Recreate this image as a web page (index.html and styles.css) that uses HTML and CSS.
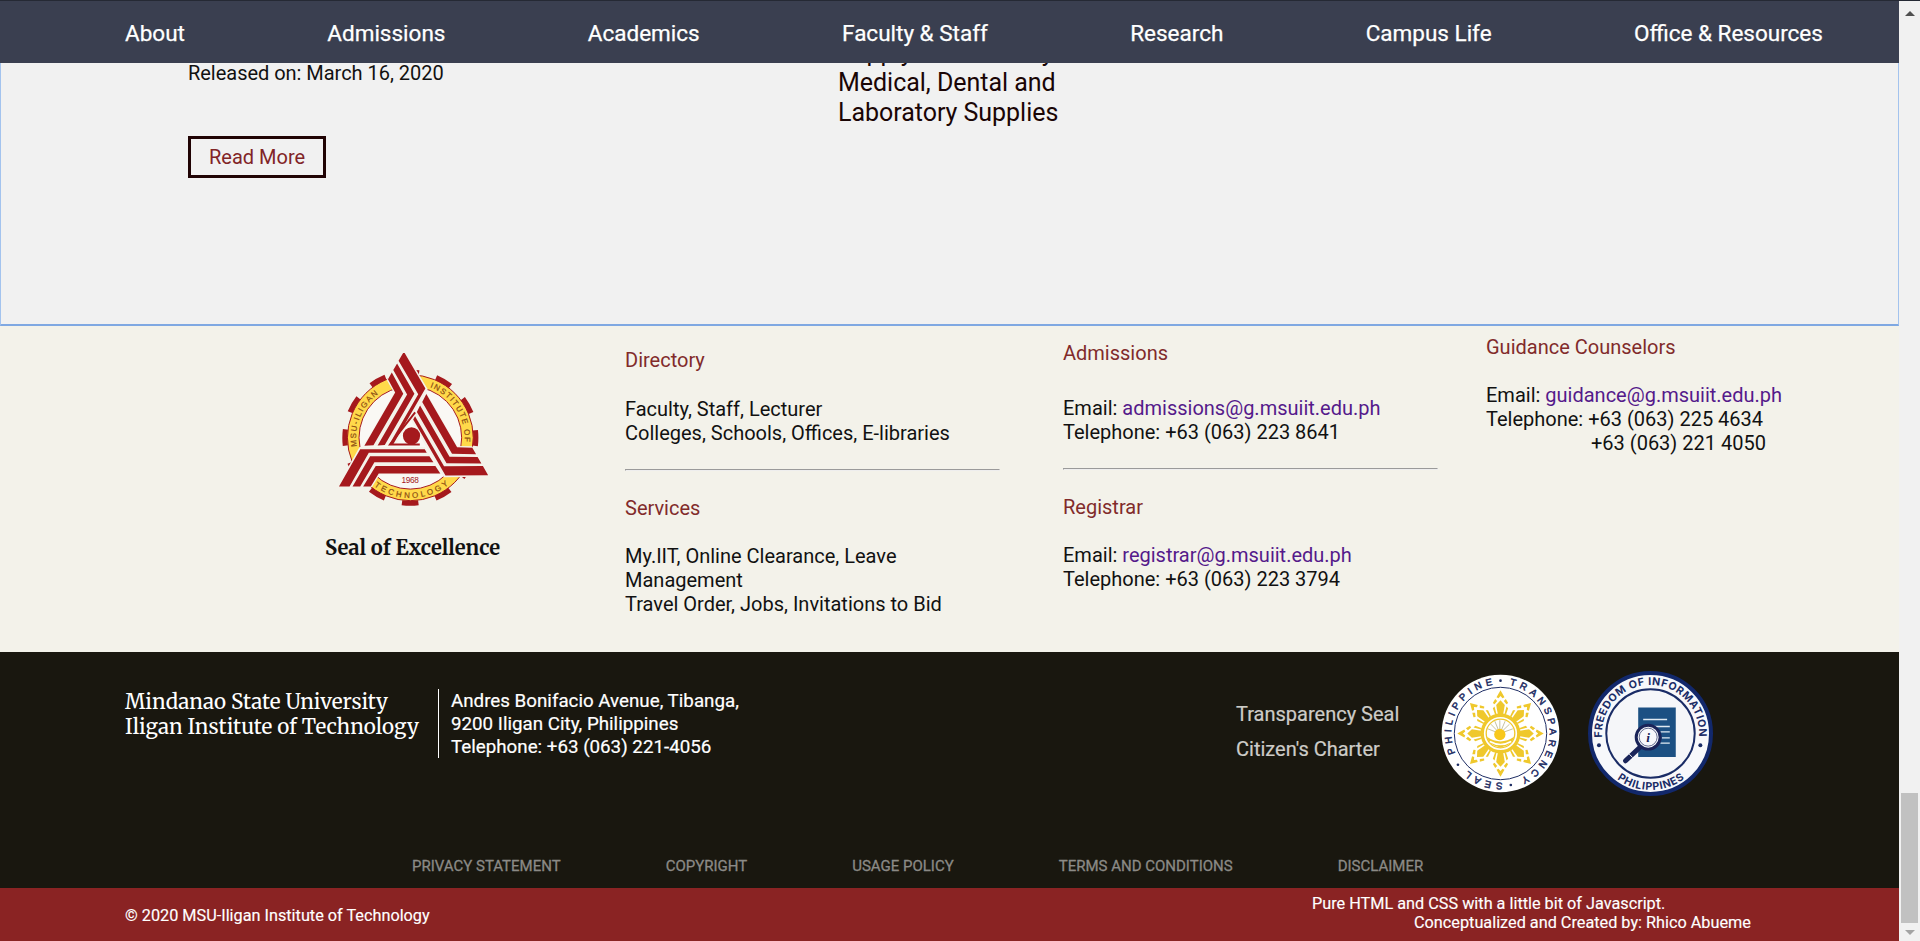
FILE: index.html
```html
<!DOCTYPE html>
<html lang="en">
<head>
<meta charset="utf-8">
<title>MSU-Iligan Institute of Technology</title>
<link rel="stylesheet" href="styles.css">
</head>
<body>
<div class="page">
  <nav class="nav">
    <a>About</a><a>Admissions</a><a>Academics</a><a>Faculty &amp; Staff</a><a>Research</a><a>Campus Life</a><a>Office &amp; Resources</a>
  </nav>
  <section class="news">
    <article class="news-left">
      <p>Released on: March 16, 2020</p>
      <a class="read-more">Read More</a>
    </article>
    <article class="news-mid">Supply and Delivery<br>Medical, Dental and<br>Laboratory Supplies</article>
  </section>
  <section class="info">
    <div class="seal">
      <svg class="seal-img" viewBox="80 66 456 465">
        <defs>
          <g id="arm">
            <path d="M86 469L150 357H345L351 367H176L118 469Z"/>
            <path d="M127 469L180 378H359L371 396H193L150 469Z"/>
            <path d="M159 469L197 407H377L392 430H206L182 469Z"/>
          </g>
          <path id="hull" d="M80 471L148 350H345L396 432H209L186 471Z"/>
          <path id="ringTop" d="M137.500 322A164 164 0 0 1 465.500 322A164 164 0 0 1 137.500 322"/>
          <path id="ringLow" d="M119.500 322A182 182 0 0 0 483.500 322"/>
        </defs>
        <circle class="cogs" cx="301.500" cy="322" r="197"/>
        <circle cx="301.500" cy="322" r="190" fill="#ffd94a" stroke="#a5191d" stroke-width="3"/>
        <circle cx="301.500" cy="322" r="155" fill="#faf8f4" stroke="#a5191d" stroke-width="3"/>
        <g fill="#f4f2ea"><use href="#hull"/><use href="#hull" transform="rotate(120 301.5 322)"/><use href="#hull" transform="rotate(240 301.5 322)"/></g>
        <g fill="#a5191d"><use href="#arm"/><use href="#arm" transform="rotate(120 301.5 322)"/><use href="#arm" transform="rotate(240 301.5 322)"/></g>
        <path d="M330 342H240L316 245" fill="none" stroke="#a5191d" stroke-width="6"/>
        <circle cx="305" cy="316" r="26" fill="#a5191d"/>
        <g class="seal-text">
          <text transform="rotate(-10 301.5 322)"><textPath href="#ringTop" startOffset="2" textLength="180">MSU-ILIGAN</textPath></text>
          <text><textPath href="#ringTop" startOffset="318" textLength="209">INSTITUTE OF</textPath></text>
          <text><textPath href="#ringLow" startOffset="168" textLength="242">TECHNOLOGY</textPath></text>
        </g>
        <text class="seal-year" x="275" y="460" textLength="52">1968</text>
      </svg>
      <h3>Seal of Excellence</h3>
    </div>
    <div class="col col-a">
      <h4>Directory</h4>
      <p>Faculty, Staff, Lecturer<br>Colleges, Schools, Offices, E-libraries</p>
      <hr>
      <h4>Services</h4>
      <p>My.IIT, Online Clearance, Leave Management<br>Travel Order, Jobs, Invitations to Bid</p>
    </div>
    <div class="col col-b">
      <h4>Admissions</h4>
      <p>Email: <a>admissions@g.msuiit.edu.ph</a><br>Telephone: +63 (063) 223 8641</p>
      <hr>
      <h4>Registrar</h4>
      <p>Email: <a>registrar@g.msuiit.edu.ph</a><br>Telephone: +63 (063) 223 3794</p>
    </div>
    <div class="col col-c">
      <h4>Guidance Counselors</h4>
      <p>Email: <a>guidance@g.msuiit.edu.ph</a><br>Telephone: +63 (063) 225 4634<br><span class="indent">+63 (063) 221 4050</span></p>
    </div>
  </section>
  <footer class="dark">
    <div class="dark-top">
      <div class="uni">Mindanao State University<br>Iligan Institute of Technology</div>
      <address>Andres Bonifacio Avenue, Tibanga,<br>9200 Iligan City, Philippines<br>Telephone: +63 (063) 221-4056</address>
      <div class="charter"><a>Transparency Seal</a><a>Citizen's Charter</a></div>
      <svg class="ts" viewBox="35 43 356 358">
        <defs>
          <path id="tsring" d="M213 74A148 148 0 0 1 213 370A148 148 0 0 1 213 74"/>
          <g id="ray">
            <path d="M205 164L200 136L213 122L226 136L221 164Z"/>
            <path d="M197 166L190 146L195 141L201 164ZM229 166L236 146L231 141L225 164Z"/>
            <path d="M213 92L225 113L219 116L213 109L207 116L201 113Z"/>
            <path d="M197 118L203 124L195 134L190 130ZM229 118L223 124L231 134L236 130Z"/>
          </g>
        </defs>
        <circle cx="213" cy="222" r="177" fill="#fff"/>
        <circle cx="213" cy="222" r="139" fill="#fff" stroke="#1d2c63" stroke-width="3"/>
        <g fill="#efc82c">
          <use href="#ray"/><use href="#ray" transform="rotate(45 213 222)"/><use href="#ray" transform="rotate(90 213 222)"/><use href="#ray" transform="rotate(135 213 222)"/><use href="#ray" transform="rotate(180 213 222)"/><use href="#ray" transform="rotate(225 213 222)"/><use href="#ray" transform="rotate(270 213 222)"/><use href="#ray" transform="rotate(315 213 222)"/>
        </g>
        <circle cx="213" cy="222" r="55" fill="#fff" stroke="#efc82c" stroke-width="10"/>
        <circle cx="213" cy="222" r="43" fill="none" stroke="#efc82c" stroke-width="4"/>
        <g fill="none" stroke="#b9b58e" stroke-width="2.500"><path d="M211 222V182M211 222L196 185M211 222L227 185M211 222L184 194M211 222L240 194M211 222L175 208M211 222L250 208"/></g>
        <path d="M172 232Q213 260 254 232Q246 260 213 264Q180 260 172 232Z" fill="#efc82c"/>
        <path d="M181 246Q213 264 245 246" fill="none" stroke="#fff" stroke-width="5"/>
        <circle cx="211" cy="225" r="17" fill="#f8c81c"/>
        <g class="ts-text">
          <text><textPath href="#tsring" startOffset="27" textLength="374">TRANSPARENCY</textPath></text>
          <text><textPath href="#tsring" startOffset="459" textLength="112">SEAL</textPath></text>
          <text><textPath href="#tsring" startOffset="636" textLength="270">PHILIPPINE</textPath></text>
        </g>
        <g fill="#1d2c63"><circle cx="213" cy="63" r="4"/><circle cx="244" cy="377" r="4"/><circle cx="85" cy="316" r="4"/></g>
      </svg>
      <svg class="foi" viewBox="474 32 376 376">
        <defs>
          <path id="foitop" d="M516 220A146 146 0 0 1 808 220A146 146 0 0 1 516 220"/>
          <path id="foilow" d="M492 220A170 170 0 0 0 832 220"/>
        </defs>
        <circle cx="662" cy="220" r="182" fill="#f7f8fb" stroke="#12286b" stroke-width="12"/>
        <circle cx="662" cy="220" r="133" fill="#f5f6f9" stroke="#1a2c66" stroke-width="6"/>
        <path d="M625 142H738V291H625Z" fill="#1c5083"/>
        <path d="M640 178H712M672 199H720M692 215H720M696 233H720M692 249H720" stroke="#dfe9f2" stroke-width="4"/>
        <path d="M632 260L587 302" stroke="#1a2459" stroke-width="15" stroke-linecap="round"/>
        <path d="M598 282L608 292" stroke="#f5f6f9" stroke-width="3"/>
        <circle cx="655" cy="231" r="36" fill="#f7f8fb" stroke="#1a2459" stroke-width="9"/>
        <circle cx="655" cy="231" r="27" fill="none" stroke="#1a2459" stroke-width="2"/>
        <text class="foi-i" x="655" y="245" text-anchor="middle">i</text>
        <g class="foi-text">
          <text transform="rotate(-5 662 220)"><textPath href="#foitop" startOffset="1" textLength="480">FREEDOM OF INFORMATION</textPath></text>
          <text><textPath href="#foilow" startOffset="159" textLength="218">PHILIPPINES</textPath></text>
        </g>
        <g fill="#1a2c66"><circle cx="507" cy="255" r="6"/><circle cx="812" cy="255" r="6"/></g>
      </svg>
    </div>
    <div class="links"><a>PRIVACY STATEMENT</a><a>COPYRIGHT</a><a>USAGE POLICY</a><a>TERMS AND CONDITIONS</a><a>DISCLAIMER</a></div>
  </footer>
  <div class="bottom">
    <span>© 2020 MSU-Iligan Institute of Technology</span>
    <div class="credit"><p>Pure HTML and CSS with a little bit of Javascript.</p><p class="by">Conceptualized and Created by: Rhico Abueme</p></div>
  </div>
</div>
<div class="scrollbar"><i class="up"></i><i class="thumb"></i><i class="down"></i></div>
</body>
</html>
```
FILE: styles.css
```css
* { box-sizing: border-box; }
body { margin: 0; height: 941px; display: flex; overflow: hidden; font: 20px/24px Roboto, sans-serif; color: #111; background: #f1f1f1; }
p, h3, h4 { margin: 0; font-weight: 400; }
.page { width: 1899px; height: 941px; display: flex; flex-direction: column; }

.nav { height: 63px; flex: none; padding: 2px 76px 0 125px; display: flex; justify-content: space-between; align-items: center; background: #3a3f50; border-top: 1px solid #252934; color: #fff; font-size: 22.5px; -webkit-text-stroke: 0.25px #fff; position: relative; z-index: 1; }

.news { height: 263px; flex: none; display: flex; background: #f1f1f1; border: 1px solid #a3c3ee; border-top: 0; border-bottom: 2px solid #7fa8e2; }
.news-left { width: 650px; margin: -2px 0 0 187px; }
.news-left p { letter-spacing: -0.03px; }
.read-more { display: inline-block; margin-top: 51px; padding: 6px 18px; border: 3px solid #200304; color: #812427; }
.news-mid { margin-top: -25px; font-size: 25px; line-height: 30px; letter-spacing: -0.03px; color: #1a0505; }

.info { height: 326px; flex: none; display: flex; background: #f3f2ea; }
.seal { width: 625px; padding: 27px 0 0 325px; }
.seal-img { display: block; width: 151px; height: 154px; margin: 0 0 1px 12px; }
.seal h3 { margin-top: 29px; font: 700 20.1px/24px Merriweather, "Noto Serif", "DejaVu Serif", serif; white-space: nowrap; }
.cogs { fill: none; stroke: #a5191d; stroke-width: 17; stroke-dasharray: 50 53.15; stroke-dashoffset: 25; }
.seal-text { font: 24px "Liberation Sans", sans-serif; fill: #8a4a12; stroke: #8a4a12; stroke-width: .6; }
.seal-year { font: 25px "Liberation Sans", sans-serif; fill: #a5191d; }
.col h4 { color: #812b2b; }
.col a { color: #551a8b; }
.col hr { margin: 24px 0 25px; }
.col-a { width: 375px; padding-top: 22px; margin-right: 63px; }
.col-a h4 { margin-bottom: 25px; }
.col-a hr + h4 { margin-bottom: 24px; }
.col-b { width: 375px; padding-top: 15px; margin-right: 48px; }
.col-b h4 { margin-bottom: 31px; }
.col-b hr + h4 { margin-bottom: 24px; }
.col-c { padding-top: 9px; }
.col-c h4 { margin-bottom: 24px; }
.indent { margin-left: 105px; }

.dark { height: 236px; flex: none; background: #19170f; color: #fff; }
.dark-top { height: 204px; padding-left: 125px; display: flex; align-items: flex-start; }
.uni { width: 313px; margin-top: 38px; font: 20.6px/25px Merriweather, "Noto Serif", "DejaVu Serif", serif; white-space: nowrap; }
address { width: 798px; height: 69px; margin-top: 37px; padding: 1px 0 0 12px; border-left: 1px solid #fff; font-style: normal; font-size: 18.75px; line-height: 23px; -webkit-text-stroke: 0.2px #fff; }
.charter { width: 205px; margin-top: 50px; display: flex; flex-direction: column; gap: 11px; color: #cdccc8; -webkit-text-stroke: 0.2px #cdccc8; }
.ts { width: 119px; height: 119px; margin-top: 22px; }
.ts-text { font: 29px "Liberation Sans", sans-serif; fill: #1d2c63; stroke: #1d2c63; stroke-width: 1.5; }
.foi { width: 125px; height: 125px; margin: 19px 0 0 28px; }
.foi-text { font: 700 32px Inter, sans-serif; fill: #1a2c66; }
.foi-i { font: italic 700 40px "Liberation Serif", serif; fill: #1a2459; }
.links { padding-left: 412px; display: flex; gap: 105px; color: #8b8a86; font-size: 15px; line-height: 20px; -webkit-text-stroke: 0.3px #8b8a86; }

.bottom { height: 53px; flex: none; padding-left: 125px; display: flex; background: #8a2323; color: #fff; font-size: 16.25px; line-height: 19px; -webkit-text-stroke: 0.15px #fff; }
.bottom > span { width: 1187px; margin-top: 18px; }
.credit { margin-top: 6px; }
.by { margin-left: 102px; }

.scrollbar { width: 21px; padding: 10px 2px 0; display: flex; flex-direction: column; align-items: center; background: #f1f1f1; border-top: 1px solid #252934; }
.up { border: 5px solid transparent; border-top: 0; border-bottom-color: #505050; }
.thumb { width: 17px; height: 130px; margin-top: 777px; background: #c1c1c1; }
.down { margin-top: 7px; border: 5px solid transparent; border-bottom: 0; border-top-color: #a3a3a3; }
```
